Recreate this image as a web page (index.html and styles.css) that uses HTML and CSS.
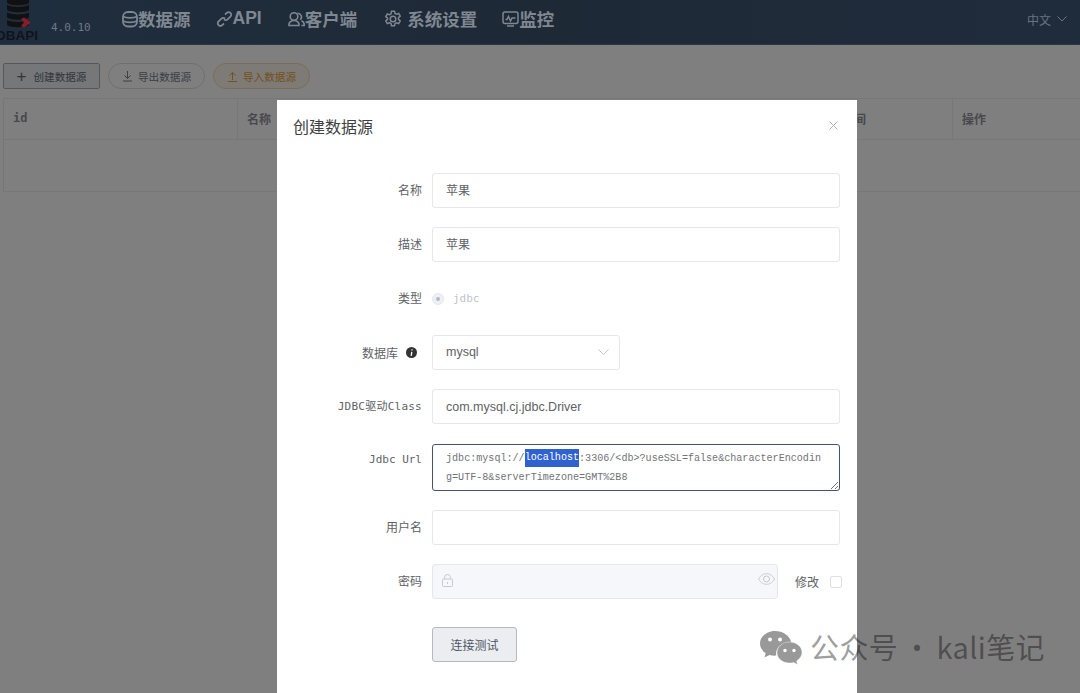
FILE: index.html
```html
<!DOCTYPE html>
<html lang="en">
  <head>
    <meta charset="UTF-8" />
    <meta name="viewport" content="width=device-width, initial-scale=1.0" />
    <title>DBAPI 数据源</title>
    <link rel="stylesheet" href="styles.css">
  </head>
  <body>
    <header class="topbar">
      <div class="logo">
        <svg class="logo-mark" width="30" height="30" viewBox="0 0 30 30">
          <path d="M7 -3h22v6c-4 3-18 3-22 0z" fill="#111"/>
          <path d="M7 5c5 2.500 17 2.500 22 0v5c-4 3-18 3-22 0z" fill="#111"/>
          <path d="M7 12.500c5 2.500 17 2.500 22 0v5c-4 3-18 3-22 0z" fill="#111"/>
          <path d="M7 20c5 2.500 17 2.500 22 0v5c-4 3-18 3-22 0z" fill="#111"/>
          <path d="M21 19l3-1.500 7 5-7 5-3-1.500 3-3.500z" fill="#8a1d2c"/>
        </svg>
        <span class="logo-text">DBAPI</span>
      </div>
      <span class="version">4.0.10</span>
      <nav class="nav">
        <a class="nav-item nav-data">
          <svg width="16" height="18" viewBox="0 0 16 18" fill="none" stroke="currentColor" stroke-width="1.800"><rect x="1" y="2" width="14" height="14.500" rx="5"/><path d="M1 6.500c3 1.800 11 1.800 14 0M1 11c3 1.800 11 1.800 14 0"/></svg>
          数据源
        </a>
        <a class="nav-item nav-api">
          <svg width="17" height="18" viewBox="0 0 17 18" fill="none" stroke="currentColor" stroke-width="1.700"><path d="M9 4.500l2-1.800a2.600 2.600 0 0 1 3.600 3.700l-3 3a2.600 2.600 0 0 1-3.700 0"/><path d="M8 13.500l-2 1.800a2.600 2.600 0 0 1-3.600-3.700l3-3a2.600 2.600 0 0 1 3.700 0"/></svg>
          API
        </a>
        <a class="nav-item nav-client">
          <svg width="17" height="18" viewBox="0 0 17 18" fill="none" stroke="currentColor" stroke-width="1.600"><circle cx="6" cy="6.500" r="3.800"/><path d="M9.500 3.200a3.800 3.800 0 0 1 2.800 6.500M1 15.500c-.4-3 2-5 5-5s5.400 2 5 5zM13.500 10.700c1.800.8 3 2.500 2.700 4.800h-2.700"/></svg>
          客户端
        </a>
        <a class="nav-item nav-settings">
          <svg width="18" height="18" viewBox="0 0 18 18" fill="none" stroke="currentColor" stroke-width="1.500"><circle cx="9" cy="9" r="2.800"/><path d="M7.500 1.200h3l.5 2.300 1.500.8 2.200-.8 1.500 2.600-1.700 1.500v1.800l1.700 1.500-1.500 2.600-2.200-.8-1.500.8-.5 2.300h-3l-.5-2.300-1.500-.8-2.200.8-1.500-2.600 1.700-1.500V8.100L1.800 6.600l1.500-2.600 2.200.8 1.500-.8z"/></svg>
          <span class="nav-gap">系统设置</span>
        </a>
        <a class="nav-item nav-monitor">
          <svg width="17" height="18" viewBox="0 0 17 18" fill="none" stroke="currentColor" stroke-width="1.500"><rect x="1" y="2" width="15" height="11.500" rx="2"/><path d="M3.500 9.500h1.500l1.500-3 2 4.500 1.500-3h3.500M5 16h7"/></svg>
          监控
        </a>
      </nav>
      <div class="lang">
        中文
        <svg width="10" height="6" viewBox="0 0 10 6" fill="none" stroke="currentColor"><path d="M.5.500L5 5 9.500.500"/></svg>
      </div>
    </header>

    <main class="page">
      <div class="toolbar">
        <button class="tool tool-create"><span class="plus">+</span>创建数据源</button>
        <button class="tool tool-round">
          <svg width="11" height="11" viewBox="0 0 11 11" fill="none" stroke="currentColor"><path d="M5.500 0v7M2.500 4.500l3 3 3-3M1 10h9"/></svg>
          导出数据源
        </button>
        <button class="tool tool-round tool-import">
          <svg width="11" height="11" viewBox="0 0 11 11" fill="none" stroke="currentColor"><path d="M5.500 9V2M2.500 4.500l3-3 3 3M1 10.500h9"/></svg>
          导入数据源
        </button>
      </div>
      <div class="table">
        <div class="table-head">
          <div class="cell mono">id</div>
          <div class="cell">名称</div>
          <div class="cell"></div>
          <div class="cell cell-time">更新时间</div>
          <div class="cell">操作</div>
        </div>
        <div class="table-empty"></div>
      </div>
    </main>

    <div class="mask">
      <section class="dialog">
        <div class="dialog-head">
          <h2>创建数据源</h2>
          <svg class="close" width="9" height="9" viewBox="0 0 9 9" stroke="#aeb1b6" fill="none"><path d="M.5.500l8 8M8.500.500l-8 8"/></svg>
        </div>
        <form class="form">
          <div class="row">
            <label>名称</label>
            <div class="input">苹果</div>
          </div>
          <div class="row">
            <label>描述</label>
            <div class="input">苹果</div>
          </div>
          <div class="row">
            <label>类型</label>
            <div class="radio"><i class="radio-dot"></i><span class="mono">jdbc</span></div>
          </div>
          <div class="row">
            <label class="label-tip">数据库
              <svg class="info" width="11" height="11" viewBox="0 0 11 11"><circle cx="5.500" cy="5.500" r="5.500" fill="#333"/><path d="M6 2.200v1.300M5.800 4.800L5.200 8.800" stroke="#fff" stroke-width="1.300"/></svg>
            </label>
            <div class="input select">
              mysql
              <svg width="11" height="6" viewBox="0 0 11 6" fill="none" stroke="#c0c4cc"><path d="M.5.500l5 5 5-5"/></svg>
            </div>
          </div>
          <div class="row">
            <label class="mono label-wide">JDBC驱动Class</label>
            <div class="input latin">com.mysql.cj.jdbc.Driver</div>
          </div>
          <div class="row row-url">
            <label class="mono">Jdbc Url</label>
            <div class="textarea">jdbc:mysql://<span class="picked">localhost</span>:3306/&lt;db&gt;?useSSL=false&amp;characterEncoding=UTF-8&amp;serverTimezone=GMT%2B8
              <svg class="grip" width="8" height="8" viewBox="0 0 8 8" stroke="#777" fill="none"><path d="M1 8l7-7M5 8l3-3"/></svg>
            </div>
          </div>
          <div class="row">
            <label>用户名</label>
            <div class="input"></div>
          </div>
          <div class="row">
            <label>密码</label>
            <div class="pass-line">
              <div class="input input-off">
                <svg width="11" height="13" viewBox="0 0 11 13" fill="none" stroke="#c6c9cf"><rect x=".5" y="5" width="10" height="7.500" rx="1"/><path d="M2.500 5V3.500a3 3 0 0 1 6 0V5M5.500 8v2"/></svg>
                <svg class="eye" width="17" height="12" viewBox="0 0 17 12" fill="none" stroke="#c6c9cf"><path d="M.5 6C3 2 5.500.7 8.500.7S14 2 16.500 6c-2.500 4-5 5.300-8 5.300S3 10 .5 6z"/><circle cx="8.500" cy="6" r="3"/></svg>
              </div>
              <span class="edit">修改</span>
              <i class="check"></i>
            </div>
          </div>
          <div class="row row-test">
            <span></span>
            <div><button type="button" class="test">连接测试</button></div>
          </div>
        </form>
      </section>
    </div>

    <div class="watermark">
      <svg width="42" height="34" viewBox="0 0 42 34">
        <path d="M15 0C7 0 0 5.500 0 12.500c0 4 2.200 7.300 5.700 9.700L4.500 26.500l5-2.600c1.700.5 3.400.8 5 .8.600 0 1.200 0 1.800-.1C15 17 22 11 30 11c.5 0 1 0 1.200.1C29.800 4.800 23 0 15 0z" fill="currentColor"/>
        <path d="M42 21.500C42 15.500 36.300 11 29.500 11S17 15.500 17 21.500 22.700 32 29.500 32c1.400 0 2.800-.2 4.200-.6l3.900 2.200-1-3.600c3.200-2.200 5.400-5.200 5.400-8.500z" fill="currentColor" stroke="#fff" stroke-opacity=".5" stroke-width=".8"/>
        <circle cx="10" cy="8.500" r="2" fill="#fff"/><circle cx="20" cy="8.500" r="2" fill="#fff"/>
        <circle cx="25" cy="19.500" r="1.700" fill="#fff"/><circle cx="34" cy="19.500" r="1.700" fill="#fff"/>
      </svg>
      <span class="watermark-text">公众号 · kali笔记</span>
    </div>
  </body>
</html>
```

FILE: styles.css
```css
html, body {
  margin: 0;
  padding: 0;
  height: 693px;
  overflow: hidden;
  background: #fff;
  font-family: "Liberation Sans", "Noto Sans CJK SC", sans-serif;
}
.mono {
  font-family: "DejaVu Sans Mono", "Noto Sans CJK SC", monospace;
}

/* top bar sits over the mask, colours are final */
.topbar {
  position: relative;
  z-index: 2;
  display: flex;
  align-items: center;
  height: 45px;
  background: linear-gradient(90deg, #1f2e3e 0%, #1e2936 50%, #1f2c3c 100%);
  border-bottom: 1px solid #2b3744;
  box-sizing: border-box;
  color: #7f8790;
}
.logo {
  width: 40px;
  height: 44px;
  display: flex;
  flex-direction: column;
  flex-shrink: 0;
  overflow: hidden;
}
.logo-mark {
  flex-shrink: 0;
}
.logo-text {
  margin-top: -1px;
  margin-left: -4px;
  font-size: 13.5px;
  line-height: 14px;
  font-weight: bold;
  color: #0f141a;
}
.version {
  margin-left: 11px;
  margin-top: 11px;
  width: 71px;
  font-size: 11px;
  font-family: "DejaVu Sans Mono", monospace;
  color: #6f7984;
}
.nav {
  display: flex;
  align-items: center;
  margin-top: -7px;
  font-size: 17.5px;
  font-weight: bold;
}
.nav-item {
  display: flex;
  align-items: center;
  margin-right: 25px;
  white-space: nowrap;
}
.nav-api {
  margin-right: 26px;
}
.nav-client {
  margin-right: 27px;
}
.nav-gap {
  margin-left: 5px;
}
.lang {
  margin-left: auto;
  margin-top: -6px;
  margin-right: 13px;
  display: flex;
  align-items: center;
  gap: 6px;
  font-size: 12px;
  color: #6a7480;
}

.page {
  padding: 18px 0 0 3px;
}
.toolbar {
  display: flex;
  gap: 8px;
  height: 26px;
}
.tool {
  width: 97px;
  height: 26px;
  padding: 0;
  display: flex;
  align-items: center;
  justify-content: center;
  gap: 5px;
  font: 10.6px "Liberation Sans", "Noto Sans CJK SC", sans-serif;
  color: #76808c;
  background: #fff;
  border: 1px solid #dcdfe6;
  border-radius: 13px;
}
.tool-create {
  color: #606a78;
  background: #eceef1;
  border-color: #a9afb9;
  border-radius: 2px;
}
.plus {
  font-size: 17px;
  font-weight: normal;
  line-height: 1;
  margin-right: 2px;
}
.tool-import {
  color: #e6a23c;
  background: #fdf6ec;
  border-color: #f5dab1;
}
.table {
  margin-top: 9px;
  border: 1px solid #ebeef5;
  border-right: 0;
  height: 94px;
  box-sizing: border-box;
}
.table-head {
  display: grid;
  grid-template-columns: 234px 240px 328px 147px 1fr;
  height: 40px;
  border-bottom: 1px solid #ebeef5;
  font-size: 12px;
  font-weight: bold;
  color: #909399;
}
.cell {
  display: flex;
  align-items: center;
  padding-left: 9px;
  padding-bottom: 2px;
  border-right: 1px solid #ebeef5;
}
.cell-time {
  justify-content: flex-end;
  padding-right: 86px;
}
.cell:last-child {
  border-right: 0;
}

.mask {
  position: absolute;
  top: 0;
  left: 0;
  right: 0;
  bottom: 0;
  background: rgba(0, 0, 0, 0.5);
  overflow: hidden;
}
.dialog {
  width: 580px;
  margin: 100px 0 0 277px;
  background: #fff;
  height: 700px;
}
.dialog-head {
  display: flex;
  justify-content: space-between;
  padding: 18px 19px 0 16px;
}
.dialog-head h2 {
  margin: 0;
  font-size: 16px;
  line-height: 20px;
  font-weight: normal;
  color: #3d3f42;
}
.close {
  margin-top: 3px;
}
.form {
  display: flex;
  flex-direction: column;
  gap: 19px;
  padding: 35px 17px 0 16px;
}
.row {
  display: grid;
  grid-template-columns: 129px 408px;
  column-gap: 10px;
  align-items: center;
  height: 35px;
}
.row label {
  justify-self: end;
  display: flex;
  align-items: center;
  gap: 8px;
  margin-bottom: 3px;
  font-size: 11px;
  color: #606266;
  white-space: nowrap;
}
.row label:not(.mono) {
  font-size: 12px;
}
.row .label-tip {
  margin-right: 5px;
  margin-bottom: 1px;
}
.label-wide {
  letter-spacing: 0.25px;
}
.input {
  height: 35px;
  box-sizing: border-box;
  padding: 0 13px 2px;
  display: flex;
  align-items: center;
  border: 1px solid #e4e7ed;
  border-radius: 3px;
  font-size: 12px;
  color: #606266;
}
.latin {
  font-size: 12.5px;
  padding-bottom: 0;
}
.select {
  width: 188px;
  justify-content: space-between;
  font-size: 12.5px;
  padding-right: 10px;
}
.radio {
  display: flex;
  align-items: center;
  gap: 9px;
  font-size: 11px;
  color: #c0c4cc;
}
.radio-dot {
  width: 12px;
  height: 12px;
  box-sizing: border-box;
  border: 1px solid #e4e7ed;
  border-radius: 50%;
  background: #edf0f5;
  display: flex;
  align-items: center;
  justify-content: center;
}
.radio-dot::after {
  content: "";
  width: 4px;
  height: 4px;
  border-radius: 50%;
  background: #b5b9c2;
}
.row-url {
  height: 47px;
  align-items: start;
  margin-top: 1px;
}
.row-url label {
  margin-top: 9px;
  margin-bottom: 0;
}
.textarea {
  position: relative;
  height: 47px;
  box-sizing: border-box;
  padding: 4px 13px;
  border: 1px solid #44546a;
  border-radius: 3px;
  font: 10.09px/19px "Liberation Mono", monospace;
  color: #707378;
  word-break: break-all;
}
.picked {
  display: inline-block;
  line-height: 18px;
  vertical-align: top;
  background: #2f62cf;
  color: #fff;
}
.grip {
  position: absolute;
  right: 1px;
  bottom: 1px;
}
.pass-line {
  display: flex;
  align-items: center;
}
.input-off {
  position: relative;
  width: 346px;
  padding-left: 9px;
  background: #f5f7fa;
}
.eye {
  position: absolute;
  right: 2px;
  top: 8px;
}
.edit {
  margin-left: 17px;
  margin-bottom: 1px;
  font-size: 12px;
  color: #606266;
}
.check {
  margin-left: 11px;
  margin-right: -2px;
  width: 12px;
  height: 12px;
  box-sizing: border-box;
  border: 1px solid #dcdfe6;
  border-radius: 2px;
  flex-shrink: 0;
}
.row-test {
  margin-top: 9px;
}
.test {
  width: 85px;
  height: 35px;
  display: block;
  font: 12px "Liberation Sans", "Noto Sans CJK SC", sans-serif;
  color: #4d5666;
  background: #ebedf0;
  border: 1px solid #b4b9c3;
  border-radius: 3px;
}

/* watermark stays above everything */
.watermark {
  position: absolute;
  z-index: 3;
  left: 760px;
  top: 628px;
  display: flex;
  align-items: center;
  gap: 8px;
  color: rgba(0, 0, 0, 0.4);
  font-family: "Noto Sans CJK SC", sans-serif;
  font-size: 29px;
  letter-spacing: 0.4px;
  word-spacing: -2.5px;
  white-space: nowrap;
}
.watermark-text {
  margin-top: -3px;
}
```
